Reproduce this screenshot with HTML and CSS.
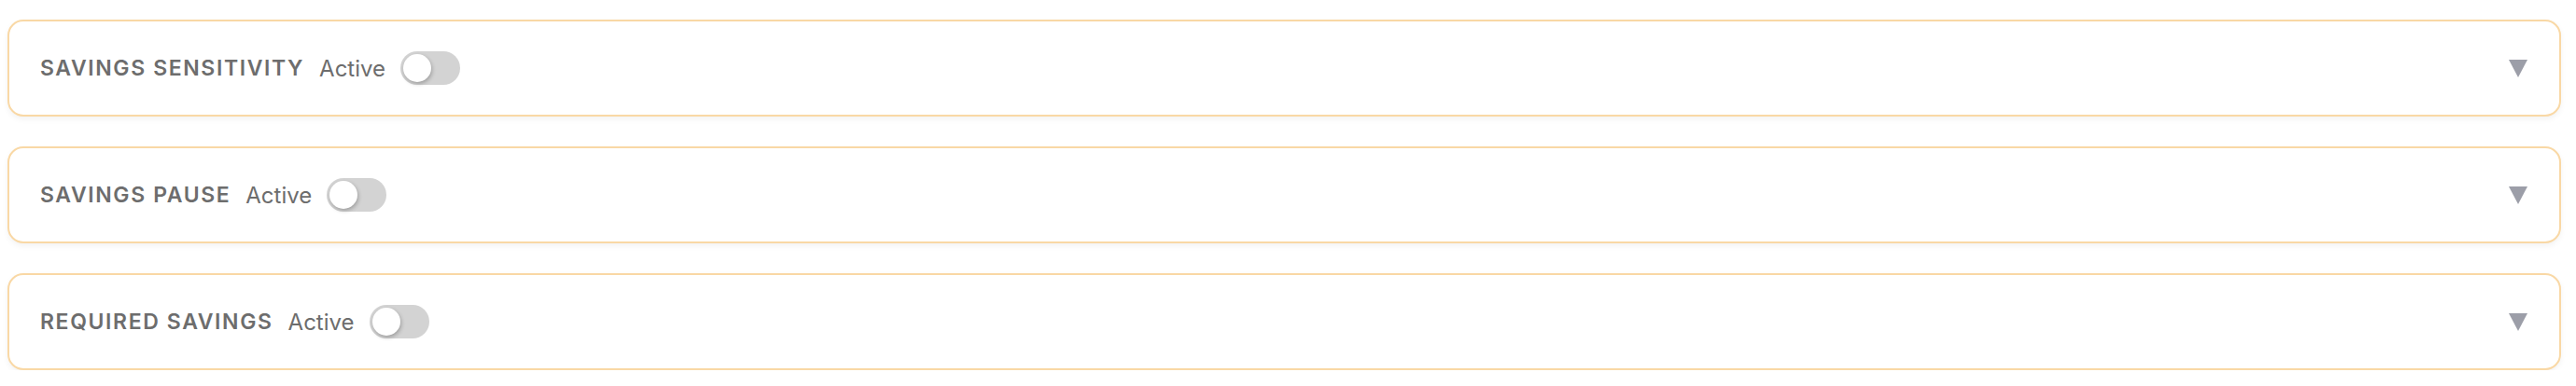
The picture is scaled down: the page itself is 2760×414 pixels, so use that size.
FILE: index.html
```html
<!DOCTYPE html>
<html lang="en">
  <head>
    <meta charset="UTF-8" />
    <meta name="viewport" content="width=device-width, initial-scale=1.0" />
    <title>Savings settings</title>
    <link rel="stylesheet" href="styles.css">
  </head>
  <body>
    <main class="settings">
      <section class="panel">
        <div class="panel__head">
          <h2 class="panel__title">Savings Sensitivity</h2>
          <span class="panel__status">Active</span>
          <label class="switch">
            <input type="checkbox" class="switch__input" />
            <span class="switch__track"><span class="switch__knob"></span></span>
          </label>
        </div>
        <svg class="panel__arrow" viewBox="0 0 20 20" width="20" height="20">
          <path d="M0 1 H20 L10 20 Z" fill="currentColor" />
        </svg>
      </section>

      <section class="panel">
        <div class="panel__head">
          <h2 class="panel__title">Savings Pause</h2>
          <span class="panel__status">Active</span>
          <label class="switch">
            <input type="checkbox" class="switch__input" />
            <span class="switch__track"><span class="switch__knob"></span></span>
          </label>
        </div>
        <svg class="panel__arrow" viewBox="0 0 20 20" width="20" height="20">
          <path d="M0 1 H20 L10 20 Z" fill="currentColor" />
        </svg>
      </section>

      <section class="panel">
        <div class="panel__head">
          <h2 class="panel__title">Required Savings</h2>
          <span class="panel__status">Active</span>
          <label class="switch">
            <input type="checkbox" class="switch__input" />
            <span class="switch__track"><span class="switch__knob"></span></span>
          </label>
        </div>
        <svg class="panel__arrow" viewBox="0 0 20 20" width="20" height="20">
          <path d="M0 1 H20 L10 20 Z" fill="currentColor" />
        </svg>
      </section>
    </main>
  </body>
</html>
```

FILE: styles.css
```css
*,
*::before,
*::after {
  padding: 0;
  margin: 0;
  box-sizing: border-box;
  font-family: "Inter", "Lato", sans-serif;
}

body {
  background-color: #fff;
}

.settings {
  display: flex;
  flex-direction: column;
  gap: 32px;
  padding: 21px 16px 0 8px;
}

/* collapsible panel */
.panel {
  height: 104px;
  display: flex;
  align-items: center;
  justify-content: space-between;
  padding: 0 34px 0 33px;
  background-color: #fff;
  border: 2px solid #f9d8a5;
  border-radius: 17px;
  box-shadow: 0 3px 6px rgba(0, 0, 0, 0.05);
}

.panel__head {
  display: flex;
  align-items: center;
  gap: 16px;
}

.panel__title {
  color: #6d6d6d;
  font-size: 23px;
  font-weight: 600;
  letter-spacing: 0.07em;
  text-transform: uppercase;
}

.panel__status {
  color: #6d6d6d;
  font-size: 24px;
  font-weight: 400;
}

.panel__arrow {
  color: #9c9ea8;
  flex-shrink: 0;
}

/* toggle */
.switch {
  display: inline-flex;
  cursor: pointer;
}

.switch__input {
  display: none;
}

.switch__track {
  width: 64px;
  height: 36px;
  border-radius: 18px;
  background-color: #d3d3d3;
  padding: 3px;
  display: flex;
  align-items: center;
  transition: background-color 0.2s ease;
}

.switch__knob {
  width: 30px;
  height: 30px;
  border-radius: 50%;
  background-color: #fff;
  box-shadow: 1px 2px 4px rgba(0, 0, 0, 0.25);
  transition: transform 0.2s ease;
}

.switch__input:checked + .switch__track {
  background-color: #f4b860;
}

.switch__input:checked + .switch__track .switch__knob {
  transform: translateX(28px);
}
```
